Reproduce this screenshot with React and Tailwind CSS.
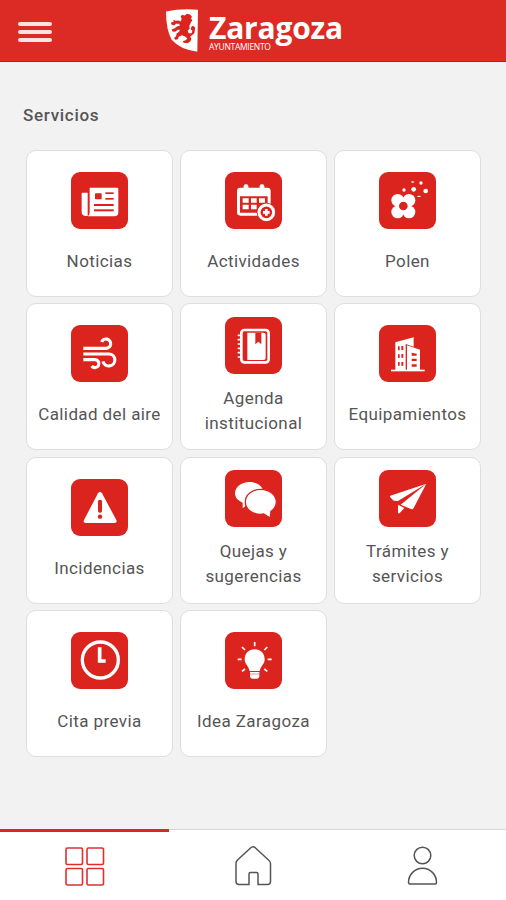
const Tile = ({ children }) => (
  <svg
    viewBox="0 0 171 171"
    className="w-[57px] h-[57px] shrink-0 rounded-[9px] bg-[#dc241f]"
    fill="white"
  >
    {children}
  </svg>
);

const NewsIcon = () => (
  <Tile>
    <path d="M35 62h15v70h-7q-11-1-11-12V65q0-3 3-3z" />
    <path d="M57 47h81q4 0 4 4v70q0 12-12 12H50q6-3 6-12V48z" />
    <g fill="#dc241f">
      <rect x="72" y="64" width="20" height="18" rx="2" />
      <rect x="103" y="61" width="25" height="5" />
      <rect x="103" y="78" width="25" height="5" />
      <rect x="69" y="96" width="59" height="6" />
      <rect x="69" y="112" width="59" height="6" />
    </g>
  </Tile>
);

const CalendarIcon = () => (
  <Tile>
    <rect x="56" y="37" width="14" height="22" rx="6" />
    <rect x="104" y="37" width="14" height="22" rx="6" />
    <rect x="36" y="47" width="101" height="84" rx="10" />
    <path d="M45 73h83v49H45z" fill="#dc241f" />
    <path d="M53 79h18v13H53zM78 79h17v13H78zM102 79h18v13h-18zM53 98h18v14H53zM78 98h17v14H78z" />
    <circle cx="124" cy="121" r="29" fill="#dc241f" />
    <circle cx="124" cy="121" r="22" fill="none" stroke="white" strokeWidth="9" />
    <path d="M120 111h8v6h6v8h-6v6h-8v-6h-6v-8h6z" />
  </Tile>
);

const PollenIcon = () => (
  <Tile>
    <rect x="53" y="82" width="40" height="40" />
    <circle cx="56" cy="85" r="19" />
    <circle cx="90" cy="85" r="19" />
    <circle cx="56" cy="120" r="19" />
    <circle cx="90" cy="120" r="19" />
    <circle cx="73" cy="102" r="13" fill="#dc241f" />
    <circle cx="75" cy="54" r="5" />
    <circle cx="104" cy="52" r="7" />
    <circle cx="140" cy="57" r="7" />
    <circle cx="126" cy="33" r="5" />
    <ellipse cx="101" cy="30" rx="5" ry="2.5" />
    <ellipse cx="120" cy="73" rx="6" ry="2" />
  </Tile>
);

const WindIcon = () => (
  <Tile>
    <g fill="none" stroke="white" strokeWidth="9.5">
      <path d="M37 70h68a14 14 0 1 0-13-19" />
      <path d="M37 87h77a18 18 0 1 1-18 22" />
      <path d="M37 104h35a12 12 0 1 1-10 19" />
    </g>
  </Tile>
);

const AgendaIcon = () => (
  <Tile>
    <rect x="49" y="39" width="82" height="97" rx="9" fill="none" stroke="white" strokeWidth="8" />
    <path d="M67 47h49q6 0 6 6v70q0 6-6 6H67z" />
    <path d="M91 47h18v35l-9-8-9 8z" fill="#dc241f" />
    <path
      d="M40 55h9M40 68h9M40 81h9M40 94h9M40 107h9M40 120h9"
      stroke="white"
      strokeWidth="5"
      strokeLinecap="round"
    />
  </Tile>
);

const BuildingsIcon = () => (
  <Tile>
    <path d="M49 52l55-15v28l-24-8v79H49z" />
    <path d="M84 61l39 13v62H84z" />
    <rect x="36" y="134" width="101" height="5" />
    <g fill="#dc241f">
      <path d="M57 64h5v12h-5zM67 63h6v12h-6zM57 88h5v11h-5zM67 87h6v11h-6zM57 111h5v11h-5zM67 111h6v11h-6z" />
      <path d="M98 83l15 3v6H98zM98 101h15v7H98zM98 118h15v7H98z" />
    </g>
  </Tile>
);

const WarningIcon = () => (
  <Tile>
    <path d="M81 43q6-9 12 0l43 80q3 8-5 9H44q-8-1-5-9z" />
    <rect x="81" y="62" width="12" height="39" rx="5" fill="#dc241f" />
    <circle cx="87" cy="113" r="6.5" fill="#dc241f" />
  </Tile>
);

const ChatIcon = () => (
  <Tile>
    <path d="M73 36c24 0 43 15 43 34s-19 34-43 34q-5 0-9-1-3 8-11 11v-16C38 92 30 82 30 70c0-19 19-34 43-34z" />
    <path
      d="M107 58c26 0 47 17 47 38 0 12-6 21-16 28l-2 20-20-12q-5 1-9 1c-26 0-46-16-46-37s20-38 46-38z"
      stroke="#dc241f"
      strokeWidth="4"
    />
  </Tile>
);

const PlaneIcon = () => (
  <Tile>
    <path d="M142 41L34 77q-3 3 0 5l10 10 13 1z" />
    <path d="M142 41L65 104l33 14q4 0 6-4z" />
    <path d="M57 104v25q4 2 6-1l13-14z" />
  </Tile>
);

const ClockIcon = () => (
  <Tile>
    <g fill="none" stroke="white" strokeWidth="10">
      <circle cx="88" cy="84" r="54" />
      <path d="M86 46v41h18" strokeWidth="11" />
    </g>
  </Tile>
);

const BulbIcon = () => (
  <Tile>
    <path d="M89 52c18 0 30 13 30 30 0 15-12 20-15 35H74c-3-15-15-20-15-35 0-17 12-30 30-30z" />
    <path d="M75 120h28v13q0 7-7 7H82q-7 0-7-7z" />
    <path d="M75 126h28" stroke="#dc241f" strokeWidth="1.5" />
    <path
      d="M89 30v13M38 82h12M128 82h12M51 45l9 9M127 45l-9 9M51 118l9-7M127 118l-9-7"
      stroke="white"
      strokeWidth="5"
    />
  </Tile>
);

const services = [
  { label: "Noticias", icon: NewsIcon },
  { label: "Actividades", icon: CalendarIcon },
  { label: "Polen", icon: PollenIcon },
  { label: "Calidad del aire", icon: WindIcon },
  { label: "Agenda institucional", icon: AgendaIcon, twoLines: true },
  { label: "Equipamientos", icon: BuildingsIcon },
  { label: "Incidencias", icon: WarningIcon },
  { label: "Quejas y sugerencias", icon: ChatIcon, twoLines: true },
  { label: "Trámites y servicios", icon: PlaneIcon, twoLines: true },
  { label: "Cita previa", icon: ClockIcon },
  { label: "Idea Zaragoza", icon: BulbIcon },
];

const Shield = () => (
  <svg viewBox="0 0 102 134" className="w-[34px] h-[45px]">
    <path d="M3 10Q50 0 99 5L97 131Q45 124 20 95 3 65 3 10z" fill="white" />
    {/* rampant lion */}
    <path
      d="M51 20l8 2 7-5 9 2 6 7-3 5 4 6-4 5-5 11 1 8-6 7 3 7 9 0 2-8-5-4 2-7 5-3 6 4 0 6-2 12-7 6-5 4 3 8-4 8-8 4-11-1-3-5 9-3 5-5-7-6-9-4-10 5-2 7-8 2-4-6 6-4 2-9 8-6 1-6-8 2-5 5-9-1-2-6 8-3 8-6 9-3-3-5-9 0-6 5-8-3-1-6 8-2-1-6 7 3 9-1 6 3 3-8-3-6z"
      fill="#dc241f"
    />
  </svg>
);

const Header = () => (
  <header className="relative h-[62px] shrink-0 flex items-center justify-center bg-[#dc2b25] border-b border-[#ce1512]">
    <button className="absolute left-[18px] top-[22px] w-[34px] flex flex-col gap-1" aria-label="Menú">
      <span className="h-1 w-full rounded-sm bg-[#fde4e1]" />
      <span className="h-1 w-full rounded-sm bg-[#fde4e1]" />
      <span className="h-1 w-full rounded-sm bg-[#fde4e1]" />
    </button>
    <div className="flex items-start gap-2.5 pl-0.5 text-white">
      <Shield />
      <div className="w-[134px] pt-[3px] font-['Open_Sans',sans-serif]">
        <div className="text-[30px] leading-[34px] font-bold tracking-[-0.2px]">Zaragoza</div>
        <div className="text-[8.5px] leading-[9px] -mt-[3px] tracking-[-0.3px]">AYUNTAMIENTO</div>
      </div>
    </div>
  </header>
);

const ServiceCard = ({ label, icon: Icon, twoLines }) => (
  <div className="h-[147px] rounded-[10px] border border-[#dcdfdf] bg-white flex flex-col items-center justify-center pb-px">
    <Icon />
    <p
      className={`w-[132px] text-center text-[17px] leading-[25px] tracking-[0.4px] text-[#555] ${
        twoLines ? "mt-3" : "mt-5"
      }`}
    >
      {label}
    </p>
  </div>
);

const BottomNav = () => (
  <nav className="h-[71px] shrink-0 grid grid-cols-3 bg-white border-t border-[#d6d6d6]">
    <div className="-mt-px border-t-[3px] border-[#d32a26] flex justify-center pt-[13px] pl-[2px]">
      <svg viewBox="0 0 42 42" className="w-[42px] h-[42px]" fill="none" stroke="#dd302c" strokeWidth="1.6">
        <rect x="2" y="3" width="16.5" height="16.5" rx="1.5" />
        <rect x="23" y="3" width="16.5" height="16.5" rx="1.5" />
        <rect x="2" y="23.5" width="16.5" height="16.5" rx="1.5" />
        <rect x="23" y="23.5" width="16.5" height="16.5" rx="1.5" />
      </svg>
    </div>
    <div className="flex justify-center pt-[14px]">
      <svg viewBox="0 0 42 44" className="w-[42px] h-[44px]" fill="none" stroke="#555" strokeWidth="1.5">
        <path d="M4 19.5Q4 17.5 5.5 16L18.5 4Q21 1.5 23.5 4L36.5 16Q38.5 17.5 38.5 19.5V37.5Q38.5 40.5 35.5 40.5H26V30Q26 28.5 24.5 28.5H18.5Q17 28.5 17 30V40.5H7Q4 40.5 4 37.5z" />
      </svg>
    </div>
    <div className="flex justify-center pt-[14px]">
      <svg viewBox="0 0 42 44" className="w-[42px] h-[44px]" fill="none" stroke="#555" strokeWidth="1.5">
        <circle cx="21.5" cy="11.5" r="8.3" />
        <path d="M7.5 38.5A14 14.3 0 0 1 35.5 38.5Q35.5 40 34 40H9Q7.5 40 7.5 38.5z" />
      </svg>
    </div>
  </nav>
);

const App = () => {
  return (
    <div className="w-[506px] h-[900px] flex flex-col bg-[#f2f2f2] font-[Roboto,sans-serif]">
      <Header />
      <main className="flex-1 pt-[41px]">
        <h1 className="pl-[23px] text-[17px] leading-6 font-medium tracking-[0.7px] text-[#555]">
          Servicios
        </h1>
        <div className="mt-[23px] ml-[26px] w-[455px] grid grid-cols-3 gap-x-[7px] gap-y-[6.3px]">
          {services.map((service) => (
            <ServiceCard key={service.label} {...service} />
          ))}
        </div>
      </main>
      <BottomNav />
    </div>
  );
};

export default App;
